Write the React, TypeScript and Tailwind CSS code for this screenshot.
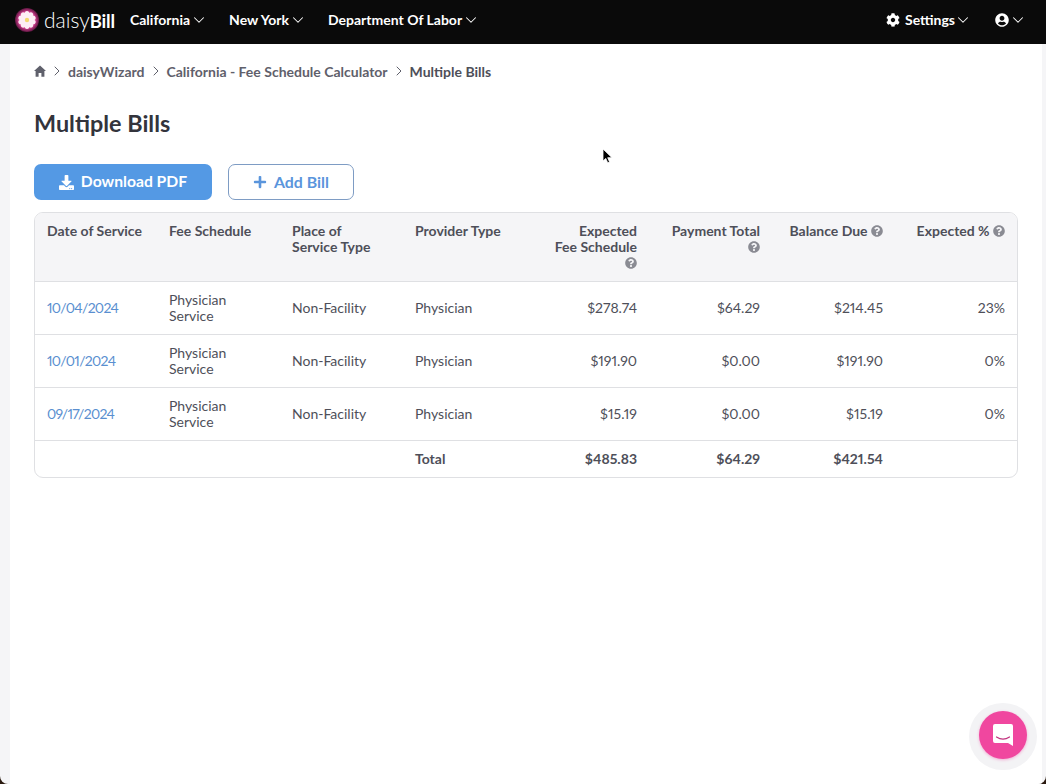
import { ChevronDown, ChevronRight } from "lucide-react";
import { FaCog, FaDownload, FaPlus, FaQuestionCircle, FaUserCircle } from "react-icons/fa";

const font = "font-['Lato','Open_Sans',sans-serif]";

function Help() {
  return <FaQuestionCircle className="inline-block text-[12px] text-[#8a8b93] align-[-1px]" />;
}

function Daisy() {
  const petals = Array.from({ length: 10 }, (_, i) => i * 36);
  return (
    <svg width="24" height="24" viewBox="0 0 24 24" className="shrink-0">
      <defs>
        <radialGradient id="g" cx="50%" cy="50%" r="50%">
          <stop offset="65%" stopColor="#e0459a" />
          <stop offset="100%" stopColor="#5e1640" />
        </radialGradient>
      </defs>
      <circle cx="12" cy="12" r="12" fill="url(#g)" />
      {petals.map((a) => (
        <ellipse key={a} cx="12" cy="7.2" rx="2.6" ry="4.2" fill="#fdeef5" transform={`rotate(${a} 12 12)`} />
      ))}
      <circle cx="12" cy="12" r="2.2" fill="#f2d872" />
    </svg>
  );
}

function Chev() {
  return <ChevronDown size={18} strokeWidth={1.4} className="-mx-[4px]" />;
}

function Crumb({ className }: { className: string }) {
  return <ChevronRight size={16} strokeWidth={1.5} className={className} />;
}

function NavItem({ label }: { label: string }) {
  return (
    <div className="flex items-center gap-[4px] text-[14px] font-bold text-white">
      <span>{label}</span>
      <Chev />
    </div>
  );
}

const rows = [
  ["10/04/2024", "$278.74", "$64.29", "$214.45", "23%"],
  ["10/01/2024", "$191.90", "$0.00", "$191.90", "0%"],
  ["09/17/2024", "$15.19", "$0.00", "$15.19", "0%"],
];

const th = "px-3 pt-[10px] align-top font-bold text-[14px] leading-4 text-[#4e4f59]";
const td = "px-3 align-middle text-[14px] leading-4 text-[#4e4f59] proportional-nums";

export default function App() {
  return (
    <div className="bg-[#2a1a10]">
      <div className={`${font} min-h-[784px] bg-[#f5f5f7] rounded-b-[8px] overflow-hidden flex flex-col`}>
        <header className="h-[44px] bg-[#0a0a0a] flex items-center pb-[5px] pl-[15px] pr-[23px]">
          <Daisy />
          <div className="ml-[5px] text-[21px] leading-none text-white w-[70px] whitespace-nowrap">
            <span className="font-light">daisy</span>
            <span className="font-bold text-[18.5px] tracking-[-0.2px]">Bill</span>
          </div>
          <div className="ml-[16px] flex items-center gap-[25px]">
            <NavItem label="California" />
            <NavItem label="New York" />
            <NavItem label="Department Of Labor" />
          </div>
          <div className="ml-auto flex items-center gap-[27px] text-white">
            <div className="flex items-center text-[14px] font-bold">
              <FaCog className="text-[14px] mr-[5px]" />
              <span className="mr-[3px]">Settings</span>
              <Chev />
            </div>
            <div className="flex items-center gap-[4px]">
              <FaUserCircle className="text-[14px]" />
              <Chev />
            </div>
          </div>
        </header>
        <main className="ml-[10px] mr-[4px] flex-1 bg-white pl-[24px]">
          <nav className="h-[56px] pb-[2px] flex items-center text-[14px] font-bold text-[#5f606b]">
            <svg width="12" height="12" viewBox="0 0 12 12" className="mr-[3px]" fill="currentColor">
              <path d="M6 0.5 12 6h-1.6v5.8H7.4V8H4.6v3.8H1.6V6H0z" />
            </svg>
            <Crumb className="mr-[3px]" />
            <span>daisyWizard</span>
            <Crumb className="mx-[3px]" />
            <span>California - Fee Schedule Calculator</span>
            <Crumb className="mx-[3px]" />
            <span className="text-[#4e4f59]">Multiple Bills</span>
          </nav>
          <h1 className="mt-[7px] text-[23.4px] leading-[32px] font-bold text-[#33343c]">Multiple Bills</h1>
          <div className="mt-[25px] flex gap-[16px]">
            <button className="w-[178px] h-[36px] rounded-[7px] bg-[#5499e4] text-white text-[15.7px] font-bold flex items-center justify-center gap-[7px]">
              <FaDownload className="text-[15px]" />
              Download PDF
            </button>
            <button className="w-[126px] h-[36px] rounded-[7px] border border-[#7e9cc4] bg-white text-[#5a95dc] text-[15.9px] font-bold flex items-center justify-center gap-[7px]">
              <FaPlus className="text-[14px]" />
              Add Bill
            </button>
          </div>
          <div className="mt-[12px] w-[984px] border border-[#dfe0e3] rounded-[9px] overflow-hidden">
            <table className="w-full table-fixed border-collapse">
              <thead>
                <tr className="h-[68px] bg-[#f5f5f7] border-b border-[#dfe0e3]">
                  <th className={`${th} text-left w-[122px]`}>Date of Service</th>
                  <th className={`${th} text-left`}>Fee Schedule</th>
                  <th className={`${th} text-left`}>Place of<br />Service Type</th>
                  <th className={`${th} text-left`}>Provider Type</th>
                  <th className={`${th} text-right`}>Expected<br />Fee Schedule<br /><Help /></th>
                  <th className={`${th} text-right`}>Payment Total<br /><Help /></th>
                  <th className={`${th} text-right`}>Balance Due <Help /></th>
                  <th className={`${th} text-right w-[122px]`}>Expected % <Help /></th>
                </tr>
              </thead>
              <tbody>
                {rows.map((r) => (
                  <tr key={r[0]} className="h-[53px] border-b border-[#dfe0e3]">
                    <td className={td}><a className="text-[#5a8fd0] tracking-[-0.7px]">{r[0]}</a></td>
                    <td className={td}>Physician<br />Service</td>
                    <td className={td}>Non-Facility</td>
                    <td className={td}>Physician</td>
                    <td className={`${td} text-right`}>{r[1]}</td>
                    <td className={`${td} text-right`}>{r[2]}</td>
                    <td className={`${td} text-right`}>{r[3]}</td>
                    <td className={`${td} text-right`}>{r[4]}</td>
                  </tr>
                ))}
                <tr className="h-[37px] font-bold">
                  <td className={td}></td>
                  <td className={td}></td>
                  <td className={td}></td>
                  <td className={`${td} font-bold`}>Total</td>
                  <td className={`${td} text-right font-bold`}>$485.83</td>
                  <td className={`${td} text-right font-bold`}>$64.29</td>
                  <td className={`${td} text-right font-bold`}>$421.54</td>
                  <td className={td}></td>
                </tr>
              </tbody>
            </table>
          </div>
        </main>
      </div>
      <svg width="12" height="16" viewBox="0 0 12 16" className="absolute left-[602px] top-[148px]">
        <path d="M1 1v12l2.8-2.6 1.9 4.4 1.9-.8-1.9-4.3H10z" fill="#000" stroke="#fff" strokeWidth="0.8" />
      </svg>
      <div className="absolute left-[969px] top-[703px] w-[68px] h-[67px] rounded-full bg-[#f3f3f5] flex justify-center pt-[8px]">
        <div className="w-[48px] h-[48px] rounded-full bg-[#f0479f] flex items-center justify-center shadow-[0_1px_3px_rgba(240,71,159,0.4)]">
          <svg width="22" height="25" viewBox="0 0 22 25">
            <path d="M3 1h16a2 2 0 0 1 2 2v20l-5-3H3a2 2 0 0 1-2-2V3a2 2 0 0 1 2-2z" fill="#fff" />
            <path d="M4.5 14c4 2.6 9 2.6 13 0" fill="none" stroke="#c2327f" strokeWidth="1.2" strokeLinecap="round" />
          </svg>
        </div>
      </div>
    </div>
  );
}
